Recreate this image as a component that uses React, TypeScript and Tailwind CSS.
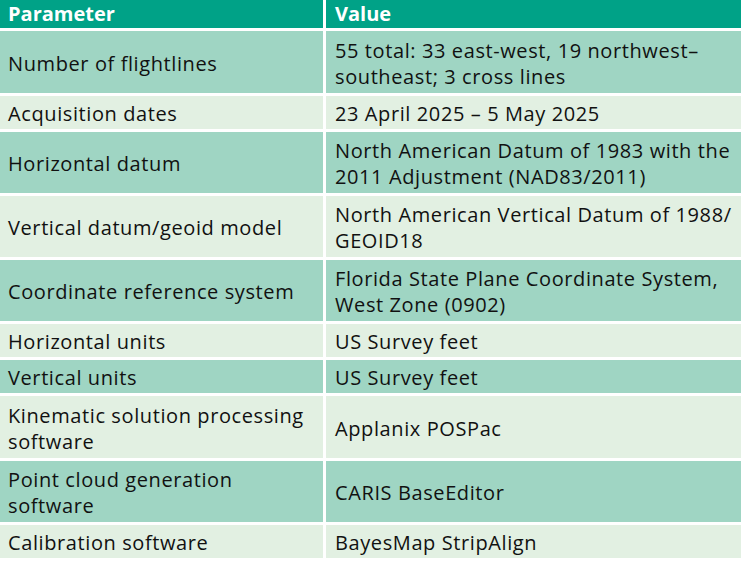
const rows: { param: string[]; value: string[]; h: string; dark: boolean }[] = [
  { param: ["Number of flightlines"], value: ["55 total: 33 east-west, 19 northwest–", "southeast; 3 cross lines"], h: "h-[62px]", dark: true },
  { param: ["Acquisition dates"], value: ["23 April 2025 – 5 May 2025"], h: "h-[33px]", dark: false },
  { param: ["Horizontal datum"], value: ["North American Datum of 1983 with the", "2011 Adjustment (NAD83/2011)"], h: "h-[61px]", dark: true },
  { param: ["Vertical datum/geoid model"], value: ["North American Vertical Datum of 1988/", "GEOID18"], h: "h-[61px]", dark: false },
  { param: ["Coordinate reference system"], value: ["Florida State Plane Coordinate System,", "West Zone (0902)"], h: "h-[61px]", dark: true },
  { param: ["Horizontal units"], value: ["US Survey feet"], h: "h-[33px]", dark: false },
  { param: ["Vertical units"], value: ["US Survey feet"], h: "h-[33px]", dark: true },
  { param: ["Kinematic solution processing", "software"], value: ["Applanix POSPac"], h: "h-[62px]", dark: false },
  { param: ["Point cloud generation", "software"], value: ["CARIS BaseEditor"], h: "h-[61px]", dark: true },
  { param: ["Calibration software"], value: ["BayesMap StripAlign"], h: "h-[33px]", dark: false },
];

function Cell({ lines, className }: { lines: string[]; className: string }) {
  return (
    <div className={`flex flex-col justify-center pl-[8px] pt-[3px] leading-[26px] ${className}`}>
      {lines.map((l) => (
        <span key={l} className="whitespace-nowrap">
          {l}
        </span>
      ))}
    </div>
  );
}

export default function App() {
  return (
    <div className="h-[561px] w-[741px] bg-white font-['Open_Sans',sans-serif] text-[20px] tracking-[0.6px] text-[#111]">
      <div className="grid grid-cols-[323px_415px] gap-x-[3px] gap-y-[3px]">
        <div className="flex h-[28px] items-center bg-[#00a287] pl-[8px] text-[20px] font-bold tracking-normal text-white">
          Parameter
        </div>
        <div className="flex h-[28px] items-center bg-[#00a287] pl-[9px] text-[20px] font-bold tracking-normal text-white">
          Value
        </div>
        {rows.map((r) => {
          const bg = r.dark ? "bg-[#9fd5c3]" : "bg-[#e2f0e2]";
          return [
            <Cell key={r.param[0] + "p"} lines={r.param} className={`${r.h} ${bg}`} />,
            <Cell key={r.param[0] + "v"} lines={r.value} className={`${r.h} ${bg} pl-[9px]`} />,
          ];
        })}
      </div>
    </div>
  );
}
